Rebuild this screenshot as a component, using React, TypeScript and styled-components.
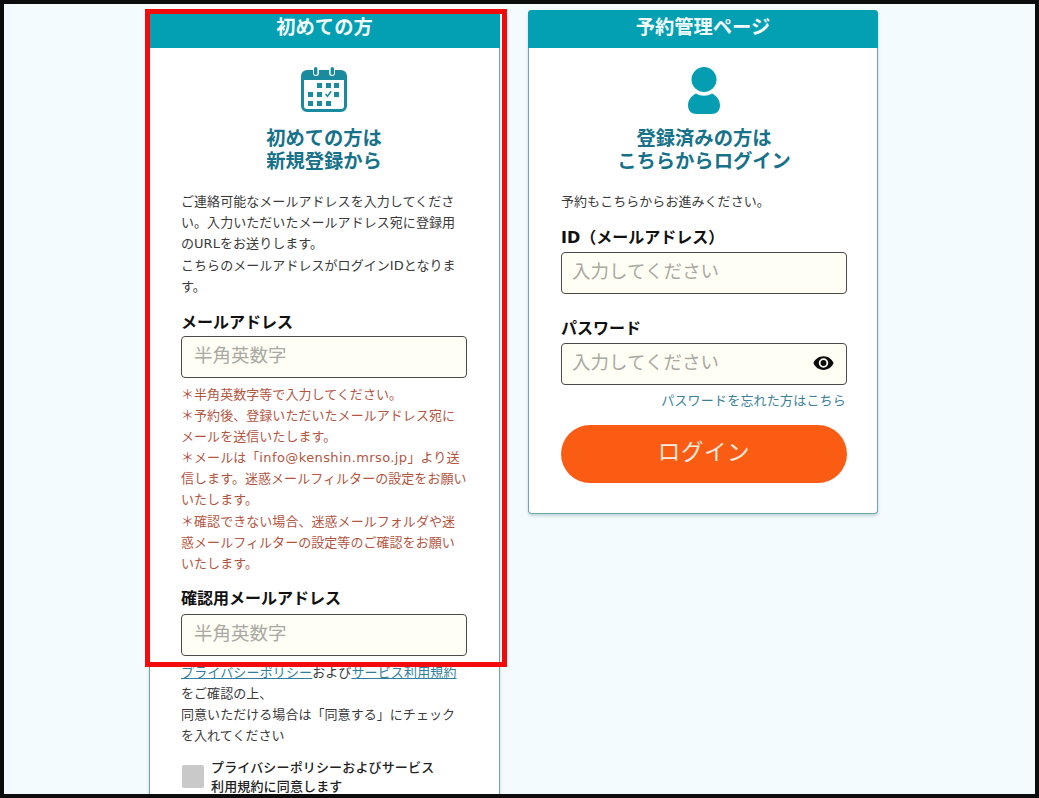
import React from "react";
import styled, { createGlobalStyle } from "styled-components";

const Global = createGlobalStyle`
  html, body { margin: 0; padding: 0; }
  body { font-family: "DejaVu Sans", "Noto Sans CJK JP", sans-serif; color: #333; }
`;

const Frame = styled.div`
  position: relative;
  box-sizing: border-box;
  width: 1039px;
  height: 798px;
  overflow: hidden;
  border: 4px solid #0c0c0c;
  background: #f3fbfe;
  display: flex;
  align-items: flex-start;
  justify-content: flex-start;
  gap: 28px;
  padding: 6px 0 0 145px;
`;

const Highlight = styled.div`
  position: absolute;
  left: 141px;
  top: 5px;
  width: 362px;
  height: 658px;
  box-sizing: border-box;
  border: 5px solid #f30a0a;
  pointer-events: none;
`;

const Card = styled.section<{ $width: number }>`
  box-sizing: border-box;
  width: ${(p) => p.$width}px;
  flex: none;
  background: #fff;
  border: 1px solid #6ea6b0;
  border-top: 0;
  border-radius: 4px;
  box-shadow: 0 2px 3px rgba(90, 130, 140, 0.3);
`;

const CardHeader = styled.h2`
  margin: 0 -1px;
  height: 38px;
  line-height: 36px;
  background: #03a0b4;
  border-radius: 4px 4px 0 0;
  color: #f2fafb;
  font-size: 19.3px;
  font-weight: 700;
  text-align: center;
`;

const CardBody = styled.div<{ $left: number; $right: number; $bottom: number }>`
  padding: 19px ${(p) => p.$right}px ${(p) => p.$bottom}px ${(p) => p.$left}px;
`;

const IconWrap = styled.div`
  height: 45px;
  display: flex;
  justify-content: center;
`;

const Heading = styled.h3`
  margin: 16px 0 17.8px;
  font-size: 19.3px;
  line-height: 22.6px;
  font-weight: 700;
  color: #16728a;
  text-align: center;
`;

const Paragraph = styled.p`
  margin: 0;
  font-size: 13px;
  line-height: 21.2px;
  color: #3a3a3a;
  letter-spacing: 0.05px;
`;

const Label = styled.label<{ $top: number; $gap: number }>`
  display: block;
  margin: ${(p) => p.$top}px 0 ${(p) => p.$gap}px;
  font-size: 16px;
  line-height: 20px;
  font-weight: 700;
  color: #111;
`;

const FieldBox = styled.div`
  position: relative;
`;

const Input = styled.input<{ $inset: number }>`
  display: block;
  box-sizing: border-box;
  width: 100%;
  height: 42px;
  padding: 0 ${(p) => p.$inset}px 3px;
  border: 1px solid #4a4a4a;
  border-radius: 4px;
  background: #fffef4;
  font-family: "DejaVu Sans", "Noto Sans CJK JP", sans-serif;
  font-size: 18.5px;
  color: #333;
  &::placeholder { color: #a9a9a3; opacity: 1; }
`;

const EyeButton = styled.span`
  position: absolute;
  right: 12px;
  top: 9px;
  display: flex;
`;

const Notes = styled.div`
  margin-top: 6px;
  font-size: 13px;
  line-height: 21.1px;
  color: #b4553f;
  letter-spacing: 0.05px;
`;

const Address = styled.span`
  letter-spacing: 0.4px;
`;

const TextLink = styled.a`
  color: #2f7f9c;
  text-decoration: underline;
  letter-spacing: 0.15px;
`;

const ForgotLink = styled.a`
  display: block;
  margin: 5px 1px 0 0;
  font-size: 13px;
  line-height: 21px;
  color: #3c7f9a;
  text-align: right;
  text-decoration: none;
  letter-spacing: 0.2px;
`;

const Consent = styled.div`
  margin-top: 6px;
`;

const CheckRow = styled.div`
  display: flex;
  align-items: center;
  gap: 7px;
  margin: 11px 0 0 1px;
`;

const CheckBox = styled.span`
  flex: none;
  width: 22px;
  height: 23px;
  background: #c9c9c9;
  border-radius: 2px;
`;

const CheckText = styled.span`
  font-size: 13px;
  line-height: 19px;
  font-weight: 500;
  color: #222;
  letter-spacing: 0.15px;
`;

const LoginButton = styled.button`
  display: block;
  width: 100%;
  height: 58px;
  margin-top: 14px;
  padding: 0 0 8px;
  border: 0;
  border-radius: 29px;
  background: #fb5c14;
  color: #fdeade;
  font-family: "DejaVu Sans", "Noto Sans CJK JP", sans-serif;
  font-size: 22.5px;
  letter-spacing: 0.6px;
`;

const Calendar = () => (
  <svg width="46" height="45" viewBox="0 0 46 45" fill="#1a8a9e">
    <path
      fillRule="evenodd"
      d="M6 3h6v3a3 3 0 0 0 6 0V3h10v3a3 3 0 0 0 6 0V3h6a6 6 0 0 1 6 6v30a6 6 0 0 1-6 6H6a6 6 0 0 1-6-6V9a6 6 0 0 1 6-6ZM3 13v26a3 3 0 0 0 3 3h34a3 3 0 0 0 3-3V13H3Z"
    />
    <rect x="13" y="0" width="3.4" height="8" rx="1.7" />
    <rect x="29.6" y="0" width="3.4" height="8" rx="1.7" />
    <rect x="16" y="16" width="5" height="5" />
    <rect x="25" y="16" width="5" height="5" />
    <rect x="33" y="16" width="5" height="5" />
    <rect x="7" y="25" width="5" height="5" />
    <rect x="16" y="25" width="5" height="5" />
    <path d="M24.500 27l2 2.300 3.600-5" fill="none" stroke="#1a8a9e" strokeWidth="1.6" />
    <rect x="33" y="25" width="5" height="5" />
    <rect x="7" y="34" width="5" height="5" />
    <rect x="16" y="34" width="5" height="5" />
    <rect x="25" y="34" width="5" height="5" />
  </svg>
);

const Person = () => (
  <svg width="32" height="47" viewBox="0 0 32 47" fill="#059db2">
    <circle cx="16" cy="12.500" r="12.500" />
    <path d="M8 26.500c2.500 1.500 5 2.200 8 2.200s5.500-.7 8-2.200c5 2.500 8 7 8 12 0 5-3.500 8.500-8.500 8.500h-15C3.500 47 0 43.500 0 38.500c0-5 3-9.500 8-12Z" />
  </svg>
);

const Eye = () => (
  <svg width="23" height="22" viewBox="0 0 24 24" fill="#0c0c0c">
    <path
      fillRule="evenodd"
      d="M12 4.500C7 4.500 2.700 7.600 1 12c1.700 4.400 6 7.500 11 7.500s9.300-3.100 11-7.500c-1.700-4.400-6-7.500-11-7.500ZM12 17.200a5.200 5.200 0 1 1 0-10.400 5.200 5.200 0 0 1 0 10.400Z"
    />
    <circle cx="12" cy="12" r="3.200" />
  </svg>
);

export default function App() {
  return (
    <Frame>
      <Global />
      <Card $width={351}>
        <CardHeader>初めての方</CardHeader>
        <CardBody $left={31} $right={32} $bottom={40}>
          <IconWrap>
            <Calendar />
          </IconWrap>
          <Heading>
            初めての方は
            <br />
            新規登録から
          </Heading>
          <Paragraph>
            ご連絡可能なメールアドレスを入力してください。入力いただいたメールアドレス宛に登録用のURLをお送りします。
            <br />
            こちらのメールアドレスがログインIDとなります。
          </Paragraph>
          <Label $top={16} $gap={3}>メールアドレス</Label>
          <Input $inset={12} placeholder="半角英数字" />
          <Notes>
            ＊半角英数字等で入力してください。
            <br />
            ＊予約後、登録いただいたメールアドレス宛にメールを送信いたします。
            <br />
            ＊メールは「<Address>info@kenshin.mrso.jp</Address>」より送信します。迷惑メールフィルターの設定をお願いいたします。
            <br />
            ＊確認できない場合、迷惑メールフォルダや迷惑メールフィルターの設定等のご確認をお願いいたします。
          </Notes>
          <Label $top={15} $gap={5}>確認用メールアドレス</Label>
          <Input $inset={12} placeholder="半角英数字" />
          <Consent>
            <Paragraph>
              <TextLink>プライバシーポリシー</TextLink>および<TextLink>サービス利用規約</TextLink>
              <br />
              をご確認の上、
              <br />
              同意いただける場合は「同意する」にチェックを入れてください
            </Paragraph>
            <CheckRow>
              <CheckBox />
              <CheckText>
                プライバシーポリシーおよびサービス
                <br />
                利用規約に同意します
              </CheckText>
            </CheckRow>
          </Consent>
        </CardBody>
      </Card>
      <Card $width={350}>
        <CardHeader>予約管理ページ</CardHeader>
        <CardBody $left={32} $right={30} $bottom={30}>
          <IconWrap>
            <Person />
          </IconWrap>
          <Heading>
            登録済みの方は
            <br />
            こちらからログイン
          </Heading>
          <Paragraph>予約もこちらからお進みください。</Paragraph>
          <Label $top={16} $gap={4}>ID（メールアドレス）</Label>
          <Input $inset={10} placeholder="入力してください" />
          <Label $top={25} $gap={4}>パスワード</Label>
          <FieldBox>
            <Input $inset={10} placeholder="入力してください" />
            <EyeButton>
              <Eye />
            </EyeButton>
          </FieldBox>
          <ForgotLink>パスワードを忘れた方はこちら</ForgotLink>
          <LoginButton>ログイン</LoginButton>
        </CardBody>
      </Card>
      <Highlight />
    </Frame>
  );
}
